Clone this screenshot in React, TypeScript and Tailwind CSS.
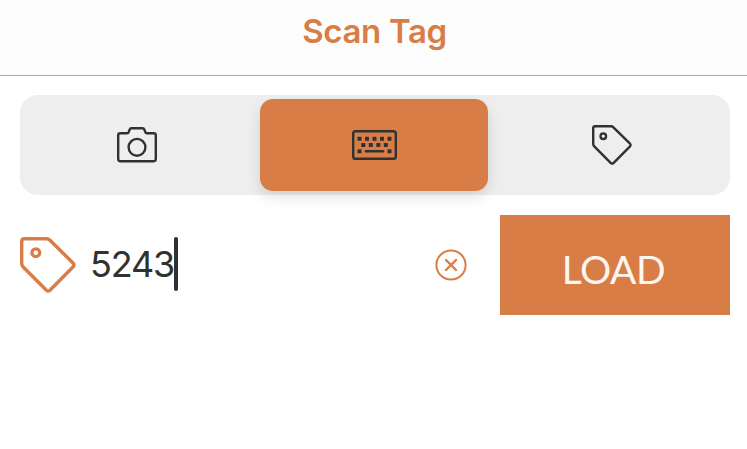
type IconProps = { className?: string };

function TagIcon({ className }: IconProps) {
  return (
    <svg viewBox="0 0 56 56" fill="none" stroke="currentColor" className={className}>
      <path
        d="M4.5 1.7H26.5Q28.5 1.7 30 3.2L53.2 26.2Q54.7 28 53.2 29.8L30 53.3Q28.2 54.8 26.4 53.3L3.2 30Q1.7 28.5 1.7 26.5V4.5Q1.7 1.7 4.5 1.7Z"
        strokeWidth="3.4"
        strokeLinejoin="round"
      />
      <circle cx="15.8" cy="15.7" r="3.9" strokeWidth="3.2" />
    </svg>
  );
}

function CameraIcon() {
  return (
    <svg viewBox="0 0 40 36" fill="none" stroke="currentColor" className="h-9 w-10" strokeWidth="2.4" strokeLinejoin="round">
      <path d="M3.3 6.3H10Q11.3 6.3 11.7 5.1L12.6 2.7Q13.1 1.3 14.5 1.3H25.5Q26.9 1.3 27.4 2.7L28.3 5.1Q28.7 6.3 30 6.3H36.7Q38.8 6.3 38.8 8.4V32.1Q38.8 34.2 36.7 34.2H3.3Q1.2 34.2 1.2 32.1V8.4Q1.2 6.3 3.3 6.3Z" />
      <circle cx="20" cy="20.3" r="8.4" />
    </svg>
  );
}

const keys: [number, number][] = [
  [7.5, 8.8], [15, 8.8], [22.5, 8.8], [30, 8.8], [37.5, 8.8],
  [11.3, 15], [18.8, 15], [26.3, 15], [33.8, 15],
  [7.5, 21.3], [37.5, 21.3],
];

function KeyboardIcon() {
  return (
    <svg viewBox="0 0 45 30" fill="none" stroke="currentColor" className="h-[30px] w-[45px]">
      <rect x="1.2" y="1.2" width="42.6" height="27.6" rx="2.4" strokeWidth="2.4" />
      {keys.map(([x, y]) => (
        <rect key={`${x}-${y}`} x={x - 2} y={y - 2} width="4" height="4" rx="0.6" fill="currentColor" stroke="none" />
      ))}
      <path d="M14 21.3H31" strokeWidth="2.5" strokeLinecap="round" />
    </svg>
  );
}

function ClearIcon() {
  return (
    <svg viewBox="0 0 32 32" fill="none" stroke="currentColor" className="size-8">
      <circle cx="16" cy="16" r="14.6" strokeWidth="2" />
      <path d="M11 11L21 21M21 11L11 21" strokeWidth="2.4" strokeLinecap="round" />
    </svg>
  );
}

export default function App() {
  return (
    <main className="h-[449px] w-[747px] overflow-hidden bg-white font-['Inter',sans-serif] text-[#303231]">
      <header className="flex h-[76px] justify-center border-b border-[#adabad] bg-[#fdfdfd] pt-2.5 pl-0.5">
        <h1 className="text-[33px] leading-[42px] font-semibold tracking-[-0.35px] whitespace-nowrap text-[#d87d45]">
          Scan Tag
        </h1>
      </header>
      <nav className="mt-[19px] ml-5 flex h-[100px] w-[710px] rounded-[18px] bg-[#eeeeee] py-1">
        <button aria-label="Camera" className="flex w-60 items-center justify-center pr-[6px]">
          <CameraIcon />
        </button>
        <button
          aria-label="Keyboard"
          className="flex w-[228px] items-center justify-center rounded-[13px] bg-[#d87d45] shadow-[0_6px_14px_rgba(0,0,0,0.12)]"
        >
          <KeyboardIcon />
        </button>
        <button aria-label="Tag" className="flex w-[242px] items-center justify-center pl-[6px]">
          <TagIcon className="size-10" />
        </button>
      </nav>
      <section className="mt-5 ml-5 flex h-[100px] w-[710px] items-center">
        <TagIcon className="size-14 shrink-0 text-[#d87d45]" />
        <div className="ml-[14px] flex w-[345px] items-center pb-0.5">
          <span className="w-[84px] text-[36px] leading-[44px] tracking-[-1.2px] whitespace-nowrap">5243</span>
          <span className="h-[54px] w-1 rounded-sm bg-[#303231]" />
        </div>
        <button aria-label="Clear" className="text-[#d87d45]">
          <ClearIcon />
        </button>
        <button className="ml-[33px] flex h-[100px] w-[230px] items-center justify-center bg-[#d87d45] pt-2 pr-[3px] font-['Lato',sans-serif] text-[39px] tracking-[-0.4px] text-[#fdf5f0]">
          LOAD
        </button>
      </section>
    </main>
  );
}
